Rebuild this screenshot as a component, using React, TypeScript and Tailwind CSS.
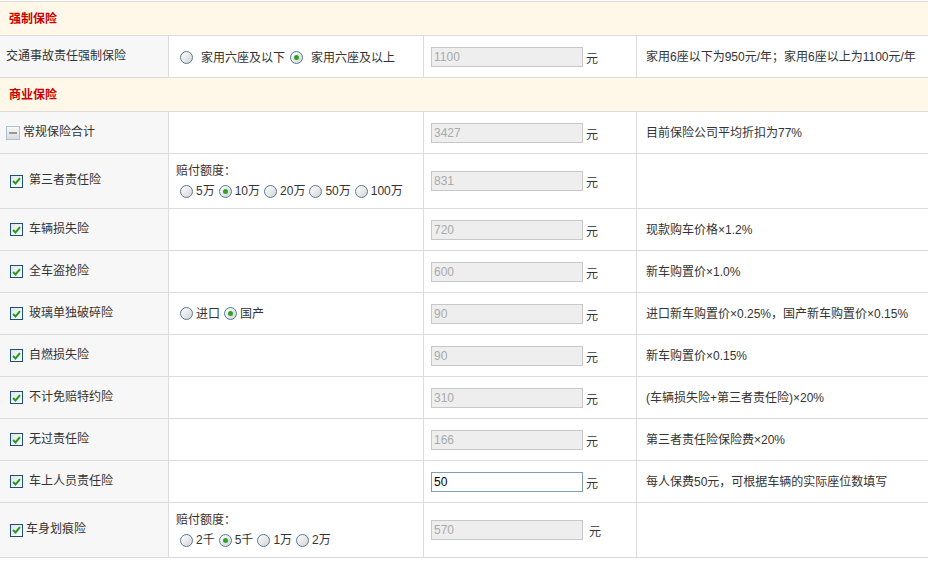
import React from "react";

type Item = {
  label: string;
  icon: "none" | "minus" | "check";
  tight?: boolean;
  value: string;
  editable?: boolean;
  note?: string;
  tall?: boolean;
  heading?: string;
  options?: { text: string; on?: boolean }[];
  spaced?: boolean;
};

function Radio({ on }: { on?: boolean }) {
  return (
    <span className="inline-flex h-[13px] w-[13px] shrink-0 items-center justify-center rounded-full border border-[#56789a] bg-linear-to-br from-white to-[#d4d4d4]">
      {on && <span className="h-[5px] w-[5px] rounded-full bg-[#2aa52a]" />}
    </span>
  );
}

function Check() {
  return (
    <span className="inline-flex h-[13px] w-[13px] shrink-0 items-center justify-center border border-[#1d4f7e] bg-linear-to-br from-[#e4e4e4] to-white">
      <svg width="9" height="8" viewBox="0 0 9 8">
        <path d="M1 4 L3.5 6.5 L8 1.2" stroke="#1f9d1f" strokeWidth="2" fill="none" />
      </svg>
    </span>
  );
}

function Minus() {
  return (
    <span className="inline-flex h-[14px] w-[14px] shrink-0 items-center justify-center border border-[#a9c1d9] bg-linear-to-b from-[#f7f7f7] to-[#dcdcdc]">
      <span className="h-[2px] w-[8px] bg-[#999]" />
    </span>
  );
}

function Options({ options, spaced }: { options: { text: string; on?: boolean }[]; spaced?: boolean }) {
  return (
    <div className="flex items-center pl-[3px]">
      {options.map((o, i) => (
        <span key={i} className={"flex items-center " + (i > 0 ? (spaced ? "ml-[5px]" : "ml-[4px]") : "")}>
          <Radio on={o.on} />
          <span className={spaced ? "ml-[8px]" : "ml-[3px]"}>{o.text}</span>
        </span>
      ))}
    </div>
  );
}

const items: Item[] = [
  { label: "常规保险合计", icon: "minus", value: "3427", note: "目前保险公司平均折扣为77%" },
  {
    label: "第三者责任险",
    icon: "check",
    value: "831",
    tall: true,
    heading: "赔付额度：",
    options: [{ text: "5万" }, { text: "10万", on: true }, { text: "20万" }, { text: "50万" }, { text: "100万" }],
  },
  { label: "车辆损失险", icon: "check", value: "720", note: "现款购车价格×1.2%" },
  { label: "全车盗抢险", icon: "check", value: "600", note: "新车购置价×1.0%" },
  {
    label: "玻璃单独破碎险",
    icon: "check",
    value: "90",
    note: "进口新车购置价×0.25%，国产新车购置价×0.15%",
    options: [{ text: "进口" }, { text: "国产", on: true }],
  },
  { label: "自燃损失险", icon: "check", value: "90", note: "新车购置价×0.15%" },
  { label: "不计免赔特约险", icon: "check", value: "310", note: "(车辆损失险+第三者责任险)×20%" },
  { label: "无过责任险", icon: "check", value: "166", note: "第三者责任险保险费×20%" },
  { label: "车上人员责任险", icon: "check", value: "50", editable: true, note: "每人保费50元，可根据车辆的实际座位数填写" },
  {
    label: "车身划痕险",
    icon: "check",
    tight: true,
    value: "570",
    tall: true,
    heading: "赔付额度：",
    options: [{ text: "2千" }, { text: "5千", on: true }, { text: "1万" }, { text: "2万" }],
  },
];

function Section({ title }: { title: string }) {
  return (
    <div className="flex h-[34px] items-center border-b border-[#dcdcdc] bg-[#fff8e8] pl-[9px] font-bold text-[#cc0000]">
      {title}
    </div>
  );
}

function Amount({ value, editable, gap }: { value: string; editable?: boolean; gap?: boolean }) {
  return (
    <div className="flex items-center border-r border-[#dcdcdc] pl-[7px]">
      <input
        readOnly
        value={value}
        className={
          "h-[20px] w-[152px] border px-[2px] text-[12px] outline-none " +
          (editable ? "border-[#7f9db9] bg-white text-black" : "border-[#c8c8c8] bg-[#eeeeee] text-[#aaaaaa]")
        }
      />
      <span className={"mt-[4px] " + (gap ? "ml-[6px]" : "ml-[3px]")}>元</span>
    </div>
  );
}

function Row({ item }: { item: Item }) {
  return (
    <div
      className={
        "grid grid-cols-[169px_255px_213px_1fr] border-b border-[#dcdcdc] " + (item.tall ? "h-[55px]" : "h-[42px]")
      }
    >
      <div
        className={
          "flex items-center border-r border-[#dcdcdc] bg-[#f7f7f7] " + (item.icon === "check" ? "pl-[10px]" : "pl-[6px]")
        }
      >
        {item.icon === "minus" && <Minus />}
        {item.icon === "check" && <Check />}
        <span className={"mb-[2px] " + (item.icon === "none" ? "" : item.tight ? "ml-[3px]" : "ml-[6px]")}>
          {item.icon === "minus" ? <span className="ml-[-3px]">{item.label}</span> : item.label}
        </span>
      </div>
      <div className="flex flex-col justify-center border-r border-[#dcdcdc] pl-[8px]">
        {item.heading && <div className="mb-[4px] ml-[-1px]">{item.heading}</div>}
        {item.options && <Options options={item.options} />}
      </div>
      <Amount value={item.value} editable={item.editable} gap={item.label === "车身划痕险"} />
      <div className="flex items-center pl-[9px]">{item.note}</div>
    </div>
  );
}

export default function App() {
  return (
    <div
      className="min-h-[562px] bg-white pt-px text-[12px] leading-[16px] text-[#333]"
      style={{ fontFamily: '"Liberation Sans", "Noto Sans CJK SC", sans-serif' }}
    >
      <div className="border-t border-[#dcdcdc]">
        <Section title="强制保险" />
        <div className="grid h-[42px] grid-cols-[169px_255px_213px_1fr] border-b border-[#dcdcdc]">
          <div className="flex items-center border-r border-[#dcdcdc] bg-[#f7f7f7] pl-[6px]">
            <span className="mb-[2px]">交通事故责任强制保险</span>
          </div>
          <div className="flex items-center border-r border-[#dcdcdc] pl-[8px]">
            <div className="mt-[2px]">
              <Options spaced options={[{ text: "家用六座及以下" }, { text: "家用六座及以上", on: true }]} />
            </div>
          </div>
          <Amount value="1100" />
          <div className="flex items-center pl-[9px]">家用6座以下为950元/年；家用6座以上为1100元/年</div>
        </div>
        <Section title="商业保险" />
        {items.map((it) => (
          <Row key={it.label} item={it} />
        ))}
      </div>
    </div>
  );
}
